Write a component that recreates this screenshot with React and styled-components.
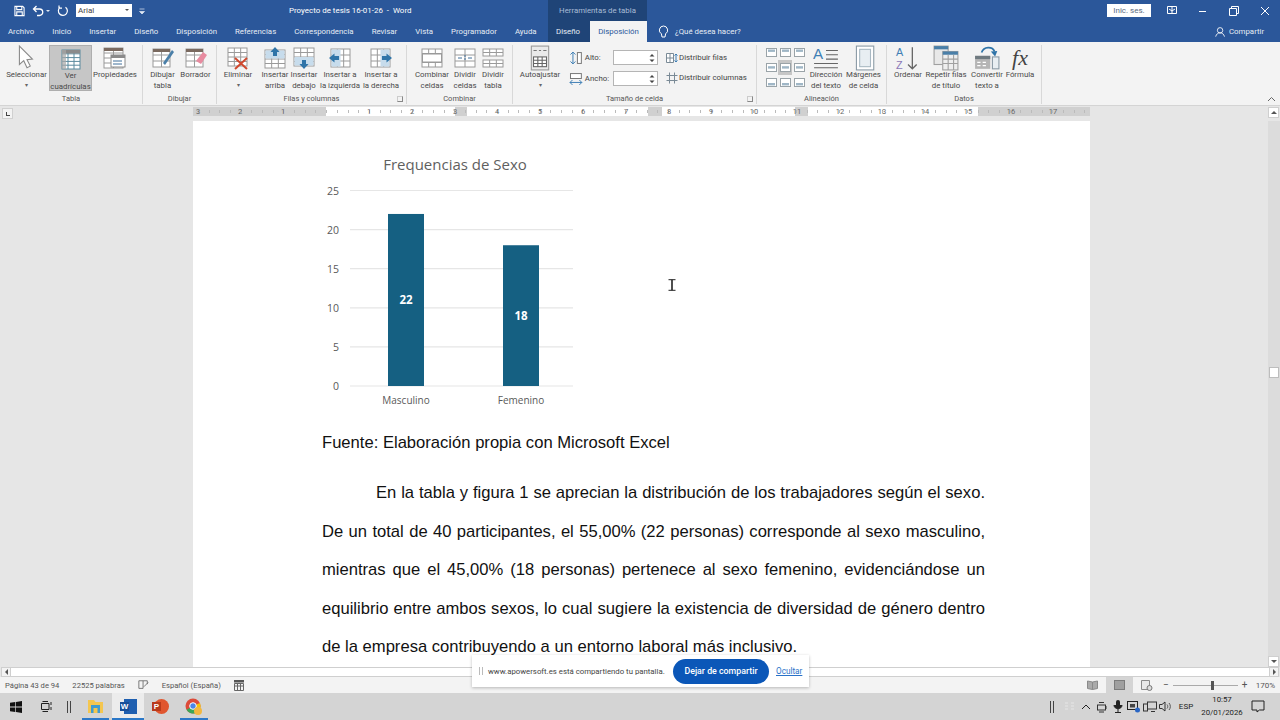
import React from 'react';
import styled, { createGlobalStyle } from 'styled-components';

const UI = `Roboto, 'Open Sans', sans-serif`;

const GlobalStyle = createGlobalStyle`
    html, body {
        margin: 0;
        padding: 0;
        height: 720px;
        overflow: hidden;
        background: #e6e6e6;
    }
    * {
        box-sizing: border-box;
    }
`;

const FormulaMark = styled.span`
    font-family: 'Liberation Serif', serif;
    font-size: 22px;
    line-height: 24px;
    color: #444;
`;

const Line = ({ d, c = '#7a7a7a', w = 1 }) => <path d={d} fill="none" stroke={c} strokeWidth={w} />;

// small ribbon table, drawn in a 24x24 box
const Grid = ({ x = 2, y = 3, w = 20, h = 18, cols = 3, rows = 4, head, c = '#9a9a9a' }) => {
    const lines = [];
    for (let i = 1; i < cols; i++) lines.push(`M${x + (w / cols) * i} ${y}V${y + h}`);
    for (let i = 1; i < rows; i++) lines.push(`M${x} ${y + (h / rows) * i}H${x + w}`);
    return (
        <g>
            <rect x={x} y={y} width={w} height={h} fill="#fff" stroke={c} />
            {head && <rect x={x} y={y} width={w} height={h / rows} fill={head} />}
            <path d={lines.join('')} stroke={c} fill="none" />
        </g>
    );
};

const Ico = ({ s = 24, children }) => (
    <svg width={s} height={s} viewBox="0 0 24 24">
        {children}
    </svg>
);

const icons = {
    select: (
        <Ico s={26}>
            <path d="M5 1L5 18L9 14.5L12 21L15 19.5L12 13.5L17 13Z" fill="#fff" stroke="#8a8a8a" />
        </Ico>
    ),
    grid: (
        <Ico s={24}>
            <Grid x={3} y={3} w={18} h={19} cols={3} rows={5} c="#5b8a9e" />
            <rect x={3} y={3} width={18} height={3.5} fill="#8a8a8a" />
            <rect x={3} y={3} width={4} height={19} fill="#a8a8a8" opacity="0.7" />
        </Ico>
    ),
    props: (
        <Ico s={24}>
            <Grid x={1} y={2} w={19} h={20} cols={2} rows={4} />
            <rect x={1} y={2} width={19} height={3} fill="#7a6a60" />
            <rect x={8} y={9} width={14} height={12} fill="#fff" stroke="#8a8a8a" />
            <rect x={8} y={9} width={14} height={3} fill="#8a8a8a" />
            <Line d="M10 15h9M10 18h9" c="#3f6f9a" />
        </Ico>
    ),
    draw: (
        <Ico s={24}>
            <Grid x={2} y={3} w={17} h={18} cols={2} rows={3} />
            <rect x={2} y={3} width={17} height={3} fill="#7a6a60" />
            <path d="M12 17L21 4L23 6L14 19Z" fill="#4a7fa8" />
        </Ico>
    ),
    eraser: (
        <Ico s={24}>
            <Grid x={2} y={3} w={17} h={18} cols={2} rows={3} />
            <rect x={2} y={3} width={17} height={3} fill="#7a6a60" />
            <path d="M12 15L19 6L23 9L17 18Z" fill="#e88ba0" />
        </Ico>
    ),
    remove: (
        <Ico s={24}>
            <Grid x={2} y={2} w={19} h={18} cols={3} rows={4} />
            <path d="M9 12L21 23M21 12L9 23" stroke="#d0492f" strokeWidth="2" fill="none" />
        </Ico>
    ),
    above: (
        <Ico s={24}>
            <Grid x={2} y={4} w={20} h={18} cols={3} rows={4} />
            <rect x={2.5} y={4.5} width={19} height={8} fill="#c7dcec" />
            <path d="M12 1L16.5 6H14V10H10V6H7.5Z" fill="#2f74a8" />
        </Ico>
    ),
    below: (
        <Ico s={24}>
            <Grid x={2} y={2} w={20} h={18} cols={3} rows={4} />
            <rect x={2.5} y={11} width={19} height={8.5} fill="#c7dcec" />
            <path d="M12 23L16.5 18H14V14H10V18H7.5Z" fill="#2f74a8" />
        </Ico>
    ),
    left: (
        <Ico s={24}>
            <Grid x={3} y={3} w={19} h={18} cols={3} rows={3} />
            <rect x={3.5} y={3.5} width={9} height={17} fill="#c7dcec" />
            <path d="M1 12L6.5 7.5V10H11V14H6.5V16.5Z" fill="#2f74a8" />
        </Ico>
    ),
    right: (
        <Ico s={24}>
            <Grid x={2} y={3} w={19} h={18} cols={3} rows={3} />
            <rect x={11.5} y={3.5} width={9} height={17} fill="#c7dcec" />
            <path d="M23 12L17.5 7.5V10H13V14H17.5V16.5Z" fill="#2f74a8" />
        </Ico>
    ),
    merge: (
        <Ico s={24}>
            <Grid x={2} y={3} w={20} h={18} cols={3} rows={4} />
            <rect x={2.5} y={8} width={19} height={8} fill="#fff" stroke="#9a9a9a" />
        </Ico>
    ),
    splitCell: (
        <Ico s={24}>
            <Grid x={2} y={3} w={20} h={18} cols={2} rows={3} />
            <path d="M12 9V15" stroke="#3f6f9a" strokeDasharray="2 1" />
            <path d="M5 12h4M15 12h4" stroke="#3f6f9a" />
        </Ico>
    ),
    splitTable: (
        <Ico s={24}>
            <Grid x={2} y={3} w={20} h={7} cols={3} rows={2} />
            <Grid x={2} y={14} w={20} h={7} cols={3} rows={2} />
        </Ico>
    ),
    autofit: (
        <Ico s={26}>
            <rect x={4} y={1} width={16} height={22} fill="#eaeaea" stroke="#9a9a9a" />
            <Line d="M6 5h3M11 5h2M15 5h3" c="#777" />
            <Grid x={6} y={11} w={12} h={9} cols={3} rows={3} c="#666" />
        </Ico>
    ),
    direction: (
        <Ico s={26}>
            <text x="0" y="13" fontFamily="Liberation Sans, sans-serif" fontSize="14" fill="#3f7fb5">
                A
            </text>
            <Line d="M12 5h11M12 9h11M12 13h11M1 17h22M1 21h22" c="#666" />
        </Ico>
    ),
    margins: (
        <Ico s={26}>
            <rect x={5} y={1} width={16} height={22} fill="#fff" stroke="#8a9aa5" />
            <rect x={8} y={4} width={10} height={16} fill="#e8eef2" stroke="#a8b8c2" />
        </Ico>
    ),
    sort: (
        <Ico s={26}>
            <text x="1" y="10" fontFamily="Liberation Sans, sans-serif" fontSize="10" fill="#3f7fb5">
                A
            </text>
            <text x="1" y="22" fontFamily="Liberation Sans, sans-serif" fontSize="10" fill="#8b78b8">
                Z
            </text>
            <Line d="M16 2V22M12 18L16 22L20 18" c="#666" w={1.2} />
        </Ico>
    ),
    repeat: (
        <Ico s={26}>
            <rect x={1} y={1} width={13} height={17} fill="#e8e8e8" stroke="#a0a0a0" />
            <rect x={1} y={1} width={13} height={3} fill="#4a7fa8" />
            <rect x={9} y={6} width={14} height={17} fill="#eee" stroke="#a0a0a0" />
            <rect x={9} y={6} width={14} height={3} fill="#4a7fa8" />
            <Line d="M9 13h14M9 17h14M14 9v14M19 9v14" c="#a0a0a0" />
        </Ico>
    ),
    convert: (
        <Ico s={26}>
            <path d="M7 7C9 1 17 1 19 6" fill="none" stroke="#2f74a8" strokeWidth="1.6" />
            <path d="M15.5 6L21.5 5.5L19.5 10.5Z" fill="#2f74a8" />
            <rect x={1} y={10} width={14} height={12} fill="#b5b5b5" />
            <rect x={1} y={10} width={14} height={3} fill="#6f7a80" />
            <Line d="M3 16h3M8 16h3M3 19h3M8 19h3" c="#fff" />
            <rect x={17} y={11} width={6} height={11} fill="#e8eef2" stroke="#8a9aa5" />
        </Ico>
    ),
    formula: (
        <FormulaMark>
            <i>fx</i>
        </FormulaMark>
    ),
};

const groups = [
    {
        title: 'Tabla',
        width: 143,
        pad: 4,
        items: [
            { label: ['Seleccionar'], icon: 'select', w: 45, caret: true },
            { label: ['Ver', 'cuadrículas'], icon: 'grid', w: 43, active: true },
            { label: ['Propiedades'], icon: 'props', w: 46 },
        ],
    },
    {
        title: 'Dibujar',
        width: 74,
        pad: 4,
        items: [
            { label: ['Dibujar', 'tabla'], icon: 'draw', w: 31 },
            { label: ['Borrador'], icon: 'eraser', w: 35 },
        ],
    },
    {
        title: 'Filas y columnas',
        width: 190,
        pad: 1,
        launcher: true,
        items: [
            { label: ['Eliminar'], icon: 'remove', w: 40, caret: true },
            { label: ['Insertar', 'arriba'], icon: 'above', w: 34 },
            { label: ['Insertar', 'debajo'], icon: 'below', w: 24 },
            { label: ['Insertar a', 'la izquierda'], icon: 'left', w: 48 },
            { label: ['Insertar a', 'la derecha'], icon: 'right', w: 34 },
        ],
    },
    {
        title: 'Combinar',
        width: 106,
        pad: 5,
        items: [
            { label: ['Combinar', 'celdas'], icon: 'merge', w: 40 },
            { label: ['Dividir', 'celdas'], icon: 'splitCell', w: 26 },
            { label: ['Dividir', 'tabla'], icon: 'splitTable', w: 30 },
        ],
    },
];

const groupsEnd = [
    {
        title: 'Datos',
        width: 155,
        pad: 2,
        items: [
            { label: ['Ordenar'], icon: 'sort', w: 38 },
            { label: ['Repetir filas', 'de título'], icon: 'repeat', w: 38 },
            { label: ['Convertir', 'texto a'], icon: 'convert', w: 44 },
            { label: ['Fórmula'], icon: 'formula', w: 22 },
        ],
    },
];

const tabs = [
    'Archivo',
    'Inicio',
    'Insertar',
    'Diseño',
    'Disposición',
    'Referencias',
    'Correspondencia',
    'Revisar',
    'Vista',
    'Programador',
    'Ayuda',
];

const rulerTicks = [
    ['3', 198], ['2', 240], ['1', 283], ['1', 369], ['2', 412], ['3', 455], ['4', 497],
    ['5', 540], ['6', 583], ['7', 626], ['8', 669], ['9', 711], ['10', 754], ['11', 797],
    ['12', 840], ['13', 882], ['14', 925], ['15', 968], ['16', 1011], ['17', 1053],
];

const rulerColumns = [
    [455, 12],
    [648, 14],
    [795, 13],
];

const Btn = ({ item }) => (
    <RibbonBtn $w={item.w} $active={item.active}>
        <IconSlot>{icons[item.icon]}</IconSlot>
        {item.label.map((t) => (
            <span key={t}>{t}</span>
        ))}
        {item.caret && <Caret>▾</Caret>}
    </RibbonBtn>
);

const Group = ({ g }) => (
    <GroupBox $w={g.width}>
        <GroupItems $pad={g.pad}>
            {g.items.map((it) => (
                <Btn key={it.label.join()} item={it} />
            ))}
        </GroupItems>
        <GroupTitle>{g.title}</GroupTitle>
        {g.launcher && <Launcher />}
    </GroupBox>
);

const AlignCell = ({ on, top, mid }) => (
    <AlignBox $on={on}>
        <svg width="11" height="9" viewBox="0 0 11 9">
            <rect x="0.5" y="0.5" width="10" height="8" fill="#fff" stroke="#9aa3a8" />
            <rect x="2" y={top ? 1.5 : mid ? 3.2 : 5} width="7" height="2.4" fill="#9fb6c6" />
        </svg>
    </AlignBox>
);

const Spinner = () => (
    <SpinBox>
        <svg width="6" height="12" viewBox="0 0 6 12">
            <path d="M0.5 4.5L3 2L5.5 4.5ZM0.5 7.5L3 10L5.5 7.5Z" fill="#444" />
        </svg>
    </SpinBox>
);

const Chart = () => {
    const yPos = (v) => 386 - v * 7.82;
    return (
        <svg width="300" height="270" viewBox="300 145 300 270">
            <g fontFamily="'Open Sans', sans-serif" fill="#595959">
                <text x="455" y="170" fontSize="15" textAnchor="middle" fill="#5f5f5f">
                    Frequencias de Sexo
                </text>
                {[0, 5, 10, 15, 20, 25].map((v) => (
                    <g key={v}>
                        <line x1="350" x2="573" y1={yPos(v)} y2={yPos(v)} stroke="#e6e6e6" strokeWidth="1.2" />
                        <text x="339" y={yPos(v) + 4} fontSize="10.5" textAnchor="end">
                            {v}
                        </text>
                    </g>
                ))}
                <rect x="388" y={yPos(22)} width="36" height={22 * 7.82} fill="#156082" />
                <rect x="503" y={yPos(18)} width="36" height={18 * 7.82} fill="#156082" />
                <text x="406" y="304" fontSize="11.5" fontWeight="700" textAnchor="middle" fill="#fff">
                    22
                </text>
                <text x="521" y="320" fontSize="11.5" fontWeight="700" textAnchor="middle" fill="#fff">
                    18
                </text>
                <text x="406" y="404" fontSize="10" textAnchor="middle">
                    Masculino
                </text>
                <text x="521" y="404" fontSize="10" textAnchor="middle">
                    Femenino
                </text>
            </g>
        </svg>
    );
};

export default function App() {
    return (
        <Screen>
            <GlobalStyle />
            <TitleBar>
                <QuickAccess>
                    <svg width="11" height="12" viewBox="0 0 12 12">
                        <path d="M1 1H9.5L11 2.5V11H1ZM3 1V4.5H8.5V1M3 11V7H9V11" fill="none" stroke="#fff" strokeWidth="1.2" />
                    </svg>
                    <svg width="20" height="12" viewBox="0 0 20 12">
                        <path d="M3 4H8.5A3.2 3.2 0 0 1 8.5 10.5H6M5.5 1L2.5 4L5.5 7" fill="none" stroke="#fff" strokeWidth="1.3" />
                        <path d="M15 5L17 7L19 5Z" fill="#dfe7f2" />
                    </svg>
                    <svg width="12" height="12" viewBox="0 0 12 12">
                        <path d="M8.5 2.2A4.5 4.5 0 1 1 3 2.4M2 0.5V3.2H5" fill="none" stroke="#fff" strokeWidth="1.2" />
                    </svg>
                    <FontPicker>
                        Arial
                        <FontCaret />
                    </FontPicker>
                    <svg width="8" height="10" viewBox="0 0 8 10">
                        <path d="M1.5 3H6.5M1.5 5.5L4 8L6.5 5.5Z" fill="#dfe7f2" stroke="#dfe7f2" strokeWidth="0.7" />
                    </svg>
                </QuickAccess>
                <DocTitle>Proyecto de tesis 16-01-26&nbsp; -&nbsp; Word</DocTitle>
                <ToolsContext>Herramientas de tabla</ToolsContext>
                <WindowArea>
                    <SignIn>Inic. ses.</SignIn>
                    <WinBtn>
                        <svg width="10" height="9" viewBox="0 0 10 9">
                            <path d="M0.5 0.5H9.5V7.5H0.5ZM5 0.5V7.5" fill="#2b579a" stroke="#fff" />
                            <path d="M2 3L5 5L8 3" fill="none" stroke="#fff" />
                        </svg>
                    </WinBtn>
                    <WinBtn>
                        <svg width="10" height="10" viewBox="0 0 10 10">
                            <path d="M1 5.5H8" stroke="#fff" />
                        </svg>
                    </WinBtn>
                    <WinBtn>
                        <svg width="10" height="10" viewBox="0 0 10 10">
                            <path d="M0.5 2.5H7.5V9.5H0.5ZM2.5 2.5V0.5H9.5V7.5H7.5" fill="none" stroke="#fff" />
                        </svg>
                    </WinBtn>
                    <WinBtn>
                        <svg width="10" height="10" viewBox="0 0 10 10">
                            <path d="M1 1L9 9M9 1L1 9" stroke="#fff" />
                        </svg>
                    </WinBtn>
                </WindowArea>
            </TitleBar>
            <TabBar>
                <TabList>
                    {tabs.map((t) => (
                        <Tab key={t}>{t}</Tab>
                    ))}
                </TabList>
                <ContextTabs>
                    <Tab>Diseño</Tab>
                    <ActiveTab>Disposición</ActiveTab>
                </ContextTabs>
                <TellMe>
                    <svg width="11" height="14" viewBox="0 0 11 14">
                        <path d="M5.5 1A4.2 4.2 0 0 1 7.6 8.8L7 12H4L3.4 8.8A4.2 4.2 0 0 1 5.5 1Z" fill="none" stroke="#fff" />
                    </svg>
                    ¿Qué desea hacer?
                </TellMe>
                <Share>
                    <svg width="11" height="12" viewBox="0 0 13 12">
                        <circle cx="6" cy="4" r="3.2" fill="none" stroke="#fff" />
                        <path d="M0.8 11.5C1.5 8.5 3.5 7 6 7C8.5 7 10.5 8.5 11.2 11.5" fill="none" stroke="#fff" />
                    </svg>
                    Compartir
                </Share>
            </TabBar>
            <Ribbon>
                {groups.map((g) => (
                    <Group key={g.title} g={g} />
                ))}
                <GroupBox $w={244}>
                    <GroupItems $pad={1}>
                        <Btn item={{ label: ['Autoajustar'], icon: 'autofit', w: 52, caret: true }} />
                        <SizeFields>
                            <SizeRow>
                                <svg width="14" height="14" viewBox="0 0 14 14">
                                    <path d="M4 1V13M1.5 3.5L4 1L6.5 3.5M1.5 10.5L4 13L6.5 10.5" fill="none" stroke="#3f7fb5" />
                                    <rect x="8.5" y="1.5" width="4" height="11" fill="#fff" stroke="#777" />
                                </svg>
                                <FieldLabel>Alto:</FieldLabel>
                                <NumberField>
                                    <Spinner />
                                </NumberField>
                            </SizeRow>
                            <SizeRow>
                                <svg width="14" height="14" viewBox="0 0 14 14">
                                    <rect x="1.5" y="1.5" width="11" height="5" fill="#fff" stroke="#777" />
                                    <path d="M1 10.5H13M3.5 8L1 10.5L3.5 13M10.5 8L13 10.5L10.5 13" fill="none" stroke="#3f7fb5" />
                                </svg>
                                <FieldLabel>Ancho:</FieldLabel>
                                <NumberField>
                                    <Spinner />
                                </NumberField>
                            </SizeRow>
                        </SizeFields>
                        <DistributeList>
                            <DistributeRow>
                                <svg width="12" height="12" viewBox="0 0 12 12">
                                    <path d="M0.5 1.5H7.5V10.5H0.5ZM0.5 6H7.5M4 1.5V10.5" fill="#fff" stroke="#7a8a96" />
                                    <path d="M10 2V10M8.5 3.5L10 2L11.5 3.5M8.5 8.5L10 10L11.5 8.5" fill="none" stroke="#3f7fb5" />
                                </svg>
                                Distribuir filas
                            </DistributeRow>
                            <DistributeRow>
                                <svg width="12" height="12" viewBox="0 0 12 12">
                                    <path d="M3.5 0.5V11.5M8.5 0.5V11.5M0.5 3.5H11.5M0.5 8.5H11.5" fill="none" stroke="#7a8a96" />
                                </svg>
                                Distribuir columnas
                            </DistributeRow>
                        </DistributeList>
                    </GroupItems>
                    <GroupTitle>Tamaño de celda</GroupTitle>
                    <Launcher />
                </GroupBox>
                <GroupBox $w={130}>
                    <GroupItems $pad={7}>
                        <AlignGrid>
                            <AlignCell top />
                            <AlignCell top />
                            <AlignCell top />
                            <AlignCell mid />
                            <AlignCell mid on />
                            <AlignCell mid />
                            <AlignCell />
                            <AlignCell />
                            <AlignCell />
                        </AlignGrid>
                        <Btn item={{ label: ['Dirección', 'del texto'], icon: 'direction', w: 38 }} />
                        <Btn item={{ label: ['Márgenes', 'de celda'], icon: 'margins', w: 37 }} />
                    </GroupItems>
                    <GroupTitle>Alineación</GroupTitle>
                </GroupBox>
                {groupsEnd.map((g) => (
                    <Group key={g.title} g={g} />
                ))}
                <Collapse>
                    <svg width="9" height="6" viewBox="0 0 9 6">
                        <path d="M1 5L4.5 1.5L8 5" fill="none" stroke="#666" />
                    </svg>
                </Collapse>
            </Ribbon>
            <RulerBar>
                <TabMark>
                    <TabGlyph />
                </TabMark>
                <Ruler>
                    <RulerMargin $w={133} />
                    <RulerMargin $w={112} $right />
                    {rulerColumns.map(([x, w]) => (
                        <RulerColumn key={x} style={{ left: x - 193, width: w }} />
                    ))}
                    {rulerTicks.map(([n, x]) => (
                        <RulerNum key={`${n}_${x}`} style={{ left: x - 193 }}>
                            {n}
                        </RulerNum>
                    ))}
                </Ruler>
                <ScrollUp>
                    <Arrow $dir="up" />
                </ScrollUp>
            </RulerBar>
            <Workspace>
                <PageArea>
                    <Page>
                        <ChartWrap>
                            <Chart />
                        </ChartWrap>
                        <Source>Fuente: Elaboración propia con Microsoft Excel</Source>
                        <Paragraph>
                            En la tabla y figura 1 se aprecian la distribución de los trabajadores según el sexo. De
                            un total de 40 participantes, el 55,00% (22 personas) corresponde al sexo masculino,
                            mientras que el 45,00% (18 personas) pertenece al sexo femenino, evidenciándose un
                            equilibrio entre ambos sexos, lo cual sugiere la existencia de diversidad de género dentro
                            de la empresa contribuyendo a un entorno laboral más inclusivo.
                        </Paragraph>
                    </Page>
                    <TextCursor>
                        <svg width="8" height="12" viewBox="0 0 8 12">
                            <path d="M0.5 0.7H7.5M0.5 11.3H7.5" stroke="#222" fill="none" />
                            <path d="M4 0.7V11.3" stroke="#222" strokeWidth="1.6" fill="none" />
                        </svg>
                    </TextCursor>
                </PageArea>
                <VScroll>
                    <VThumb />
                    <ScrollDown>
                        <Arrow $dir="down" />
                    </ScrollDown>
                </VScroll>
            </Workspace>
            <HScroll>
                <ScrollCap>
                    <Arrow $dir="left" />
                </ScrollCap>
                <HTrack />
                <ScrollCap>
                    <Arrow $dir="right" />
                </ScrollCap>
            </HScroll>
            <StatusBar>
                <StatusText>Página 43 de 94</StatusText>
                <StatusText>22525 palabras</StatusText>
                <svg width="11" height="12" viewBox="0 0 13 12">
                    <path d="M1 1H6V10H1ZM6 1H11V5M7 8L12 3" fill="none" stroke="#666" />
                </svg>
                <StatusText>Español (España)</StatusText>
                <svg width="10" height="11" viewBox="0 0 10 11">
                    <path d="M0.5 3.5H9.5V10.5H0.5ZM0.5 6H9.5M3.5 3.5V10.5M6.5 3.5V10.5" fill="none" stroke="#666" />
                    <rect x="0" y="0" width="10" height="2.5" fill="#555" />
                </svg>
                <ViewControls>
                    <ViewBtn>
                        <svg width="11" height="10" viewBox="0 0 11 10">
                            <path d="M0.5 1L5.5 2V9.5L0.5 8.5ZM10.5 1L5.5 2V9.5L10.5 8.5Z" fill="#aaa" stroke="#8a8a8a" />
                        </svg>
                    </ViewBtn>
                    <ViewBtn $on>
                        <svg width="11" height="10" viewBox="0 0 11 10">
                            <rect x="0.5" y="0.5" width="10" height="9" fill="#a0a0a0" stroke="#7c7c7c" />
                        </svg>
                    </ViewBtn>
                    <ViewBtn>
                        <svg width="12" height="11" viewBox="0 0 12 11">
                            <path d="M0.5 0.5H8.5V9.5H0.5Z" fill="#e8e8e8" stroke="#8a8a8a" />
                            <circle cx="8.5" cy="8" r="2.5" fill="#ddd" stroke="#777" />
                        </svg>
                    </ViewBtn>
                </ViewControls>
                <ZoomControl>
                    <ZoomSign>−</ZoomSign>
                    <ZoomTrack>
                        <ZoomThumb />
                    </ZoomTrack>
                    <ZoomSign>+</ZoomSign>
                    <ZoomValue>170%</ZoomValue>
                </ZoomControl>
            </StatusBar>
            <Taskbar>
                <TaskIcons>
                    <TaskSlot $w={32}>
                        <svg width="12" height="12" viewBox="0 0 12 12">
                            <path d="M0 1.8L5.3 1V5.6H0ZM6 0.9L12 0V5.6H6ZM0 6.4H5.3V11L0 10.2ZM6 6.4H12V12L6 11.1Z" fill="#111" />
                        </svg>
                    </TaskSlot>
                    <TaskSlot $w={30}>
                        <svg width="12" height="11" viewBox="0 0 12 11">
                            <path d="M0.5 2.5H8V8.5H0.5ZM1.5 0.5H7M1.5 10.5H7M10 1V4M10 6V9" fill="none" stroke="#222" />
                        </svg>
                    </TaskSlot>
                    <TaskSlot $w={14}>
                        <Bars />
                    </TaskSlot>
                    <TaskSlot $w={27} $ml={6} $open>
                        <svg width="17" height="15" viewBox="0 0 17 15">
                            <path d="M1 1H7L8.5 3H16V14H1Z" fill="#f4c64f" />
                            <rect x="4" y="6" width="9" height="8" fill="#3f9bd0" />
                            <rect x="6.5" y="9" width="4" height="5" fill="#f4c64f" />
                        </svg>
                    </TaskSlot>
                    <TaskSlot $w={32} $ml={3} $open $active>
                        <svg width="17" height="15" viewBox="0 0 17 15">
                            <rect x="4" y="0" width="13" height="15" fill="#1f5fb0" />
                            <rect x="0" y="3" width="9" height="9" fill="#1a4f98" />
                            <WordLetter x="4.5" y="10.4" textAnchor="middle">W</WordLetter>
                        </svg>
                    </TaskSlot>
                    <TaskSlot $w={32}>
                        <svg width="17" height="15" viewBox="0 0 17 15">
                            <circle cx="9.5" cy="7.5" r="7.5" fill="#e0562f" />
                            <rect x="0" y="3" width="9" height="9" fill="#b83a1b" />
                            <WordLetter x="4.5" y="10.4" textAnchor="middle">P</WordLetter>
                        </svg>
                    </TaskSlot>
                    <TaskSlot $w={28} $ml={4} $open>
                        <svg width="18" height="18" viewBox="0 0 18 18">
                            <circle cx="8" cy="8" r="7.5" fill="#dd4b39" />
                            <path d="M8 8L1.5 11.8A7.5 7.5 0 0 0 11.5 14.7Z" fill="#3aa757" />
                            <path d="M8 8L11.5 14.7A7.5 7.5 0 0 0 15 5Z" fill="#f4c20d" />
                            <circle cx="8" cy="8" r="3.3" fill="#4a85e8" stroke="#fff" />
                            <circle cx="13" cy="13" r="4" fill="#f2b73f" />
                        </svg>
                    </TaskSlot>
                </TaskIcons>
                <Tray>
                    <TraySlot $w={16}>
                        <Bars />
                    </TraySlot>
                    <TraySlot $w={18}>
                        <svg width="9" height="9" viewBox="0 0 9 9">
                            <path d="M0 1H3M0 4H3M0 7H3M6 1H9M6 4H9M6 7H9" stroke="#e6e6e6" />
                        </svg>
                    </TraySlot>
                    <TraySlot $w={16}>
                        <svg width="10" height="6" viewBox="0 0 10 6">
                            <path d="M1 5L5 1L9 5" fill="none" stroke="#222" />
                        </svg>
                    </TraySlot>
                    <TraySlot $w={16}>
                        <svg width="12" height="12" viewBox="0 0 12 12">
                            <rect x="1.5" y="4" width="8" height="5" fill="none" stroke="#333" />
                            <path d="M3 1.5H8M3 11H8M10 5V8" stroke="#333" />
                        </svg>
                    </TraySlot>
                    <TraySlot $w={16}>
                        <svg width="10" height="13" viewBox="0 0 10 13">
                            <rect x="3" y="0" width="4" height="8" rx="2" fill="#222" />
                            <path d="M1 5C1 10 9 10 9 5M5 9V12M2 12.5H8" fill="#222" stroke="#222" />
                        </svg>
                    </TraySlot>
                    <TraySlot $w={15}>
                        <svg width="13" height="13" viewBox="0 0 13 13">
                            <rect x="0.5" y="1.5" width="10" height="8" fill="none" stroke="#222" />
                            <rect x="3" y="4" width="5" height="3.5" fill="#444" />
                            <circle cx="10.5" cy="10" r="2.5" fill="#2a66c4" />
                        </svg>
                    </TraySlot>
                    <TraySlot $w={17}>
                        <svg width="14" height="12" viewBox="0 0 14 12">
                            <rect x="4.5" y="1" width="9" height="7" fill="none" stroke="#333" />
                            <rect x="0.5" y="3" width="4" height="7" fill="none" stroke="#333" />
                            <path d="M8 10.5H12" stroke="#333" />
                        </svg>
                    </TraySlot>
                    <TraySlot $w={15}>
                        <svg width="13" height="11" viewBox="0 0 13 11">
                            <path d="M0.5 3.5H3L6 1V10L3 7.5H0.5Z" fill="none" stroke="#333" />
                            <path d="M8 3.5C9 4.5 9 6.5 8 7.5M10 2C11.8 4 11.8 7 10 9" fill="none" stroke="#555" />
                        </svg>
                    </TraySlot>
                    <TraySlot $w={26}>ESP</TraySlot>
                    <Clock>
                        <span>10:57</span>
                        <span>20/01/2026</span>
                    </Clock>
                    <TraySlot $w={26}>
                        <svg width="14" height="13" viewBox="0 0 14 13">
                            <path d="M1 1H13V10H8.5L6 12V10H1Z" fill="none" stroke="#222" />
                        </svg>
                    </TraySlot>
                </Tray>
            </Taskbar>
            <ShareBar>
                <Grip />
                <ShareText>www.apowersoft.es está compartiendo tu pantalla.</ShareText>
                <StopBtn>Dejar de compartir</StopBtn>
                <HideLink>Ocultar</HideLink>
            </ShareBar>
        </Screen>
    );
}

const Screen = styled.div`
    position: relative;
    width: 1280px;
    height: 720px;
    display: flex;
    flex-direction: column;
    overflow: hidden;
    font-family: ${UI};
    color: #444;
    background: #e6e6e6;
`;

const TitleBar = styled.div`
    height: 21px;
    flex: none;
    display: flex;
    align-items: center;
    background: #2b579a;
    color: #fff;
    font-size: 8.5px;
`;

const QuickAccess = styled.div`
    width: 289px;
    padding-left: 14px;
    display: flex;
    align-items: center;
    gap: 6px;
`;

const FontPicker = styled.div`
    position: relative;
    width: 56px;
    height: 13px;
    margin-left: 1px;
    padding-left: 2px;
    background: #fff;
    color: #444;
    font-size: 8px;
    line-height: 13px;
`;

const FontCaret = styled.i`
    position: absolute;
    right: 3px;
    top: 5px;
    border: 2.5px solid transparent;
    border-top-color: #555;
`;

const DocTitle = styled.div`
    width: 259px;
    font-size: 7.95px;
    white-space: nowrap;
`;

const ToolsContext = styled.div`
    width: 99px;
    height: 100%;
    display: flex;
    align-items: center;
    justify-content: center;
    background: #1f4477;
    color: #a9bcd6;
    font-size: 7.8px;
`;

const WindowArea = styled.div`
    margin-left: auto;
    display: flex;
    align-items: center;
`;

const SignIn = styled.div`
    width: 44px;
    height: 13px;
    margin-right: 5px;
    background: #fff;
    color: #5a6a80;
    font-size: 8px;
    line-height: 13px;
    text-align: center;
`;

const WinBtn = styled.div`
    width: 31px;
    display: flex;
    justify-content: center;
    align-items: center;
`;

const TabBar = styled.div`
    height: 21px;
    flex: none;
    display: flex;
    align-items: center;
    background: #2b579a;
    color: #e6ecf5;
    font-size: 7.85px;
    white-space: nowrap;
`;

const TabList = styled.div`
    width: 548px;
    flex: none;
    padding-left: 8px;
    display: flex;
    gap: 18px;
`;

const Tab = styled.span`
    flex: none;
`;

const ContextTabs = styled.div`
    width: 99px;
    height: 100%;
    flex: none;
    padding-left: 8px;
    display: flex;
    align-items: center;
    gap: 10px;
    background: #1f4477;
`;

const ActiveTab = styled.span`
    height: 100%;
    width: 57px;
    display: flex;
    align-items: center;
    justify-content: center;
    background: #f3f3f3;
    color: #2b579a;
`;

const TellMe = styled.div`
    margin-left: 11px;
    display: flex;
    align-items: center;
    gap: 6px;
`;

const Share = styled.div`
    margin-left: auto;
    width: 65px;
    display: flex;
    align-items: center;
    gap: 3px;
`;

const Ribbon = styled.div`
    position: relative;
    height: 63px;
    flex: none;
    display: flex;
    background: #f3f3f3;
    font-size: 7.85px;
`;

const GroupBox = styled.div`
    position: relative;
    flex: none;
    width: ${(p) => p.$w}px;
    margin: 3px 0 1px;
    display: flex;
    flex-direction: column;
    border-right: 1px solid #d8d8d8;
`;

const GroupItems = styled.div`
    flex: 1;
    padding-left: ${(p) => p.$pad}px;
    display: flex;
    min-height: 0;
`;

const GroupTitle = styled.div`
    height: 11px;
    line-height: 11px;
    text-align: center;
    color: #555;
    font-size: 7.5px;
`;

const Launcher = styled.i`
    position: absolute;
    right: 3px;
    bottom: 2px;
    width: 6px;
    height: 6px;
    border: 1px solid #888;
    border-top-color: #ccc;
    border-left-color: #ccc;
`;

const RibbonBtn = styled.div`
    flex: none;
    width: ${(p) => p.$w}px;
    height: 46px;
    display: flex;
    flex-direction: column;
    align-items: center;
    color: #4a4a4a;
    line-height: 10.5px;
    white-space: nowrap;
    background: ${(p) => (p.$active ? '#c6c6c6' : 'transparent')};
    border: ${(p) => (p.$active ? '1px solid #aeaeae' : 'none')};
`;

const IconSlot = styled.div`
    height: 25px;
    flex: none;
    display: flex;
    align-items: center;
    justify-content: center;
`;

const Caret = styled.span`
    font-size: 6px;
    line-height: 8px;
    color: #666;
`;

const SizeFields = styled.div`
    width: 89px;
    margin-left: 3px;
    display: flex;
    flex-direction: column;
    gap: 6px;
    padding-top: 5px;
`;

const SizeRow = styled.div`
    height: 15px;
    display: flex;
    align-items: center;
    gap: 2px;
`;

const FieldLabel = styled.span`
    width: 26px;
`;

const NumberField = styled.div`
    width: 46px;
    height: 15px;
    margin-left: auto;
    display: flex;
    justify-content: flex-end;
    background: #fff;
    border: 1px solid #b5b5b5;
`;

const SpinBox = styled.div`
    width: 8px;
    display: flex;
    align-items: center;
`;

const DistributeList = styled.div`
    width: 88px;
    margin-left: 8px;
    display: flex;
    flex-direction: column;
    gap: 7px;
    padding-top: 6px;
`;

const DistributeRow = styled.div`
    height: 13px;
    display: flex;
    align-items: center;
    gap: 1px;
    white-space: nowrap;
`;

const AlignGrid = styled.div`
    width: 43px;
    display: grid;
    grid-template-columns: repeat(3, 14px);
    grid-auto-rows: 15px;
`;

const AlignBox = styled.div`
    display: flex;
    align-items: center;
    justify-content: center;
    background: ${(p) => (p.$on ? '#c6c6c6' : 'transparent')};
`;

const Collapse = styled.div`
    position: absolute;
    right: 4px;
    bottom: 1px;
`;

const RulerBar = styled.div`
    height: 16px;
    flex: none;
    display: flex;
    align-items: flex-start;
    background: #e6e6e6;
    border-top: 1px solid #d4d4d4;
`;

const TabMark = styled.div`
    width: 11px;
    height: 11px;
    margin: 2px 0 0 2px;
    display: flex;
    align-items: center;
    justify-content: center;
    background: #f3f3f3;
    border: 1px solid #d0d0d0;
`;

const TabGlyph = styled.i`
    width: 4px;
    height: 4px;
    border-left: 1px solid #444;
    border-bottom: 1px solid #444;
`;

const Ruler = styled.div`
    position: relative;
    width: 897px;
    height: 9px;
    margin: 1px 0 0 180px;
    display: flex;
    background: #fff;

    &::after {
        content: '';
        position: absolute;
        left: 5px;
        right: 0;
        top: 3px;
        height: 3px;
        background: repeating-linear-gradient(90deg, #bbb 0 1px, transparent 1px 10.68px);
    }
`;

const RulerMargin = styled.div`
    width: ${(p) => p.$w}px;
    height: 100%;
    background: #d0d0d0;
    margin-left: ${(p) => (p.$right ? 'auto' : 0)};
    flex: none;
`;

const RulerColumn = styled.div`
    position: absolute;
    top: 0;
    height: 100%;
    background: #d0d0d0;
`;

const RulerNum = styled.span`
    position: absolute;
    z-index: 1;
    top: 0;
    padding: 0 2px;
    transform: translateX(-50%);
    font-size: 7.5px;
    line-height: 9px;
    color: #666;
`;

const ScrollUp = styled.div`
    width: 11px;
    height: 11px;
    margin: 1px 1px 0 auto;
    display: flex;
    align-items: center;
    justify-content: center;
    background: #fff;
    border: 1px solid #cfcfcf;
`;

const ScrollDown = styled(ScrollUp)`
    margin: auto 0 0;
`;

const Arrow = styled.i`
    width: 0;
    height: 0;
    border: 3px solid transparent;
    ${(p) =>
        p.$dir === 'up'
            ? 'border-bottom-color:#555;margin-top:-3px;'
            : p.$dir === 'down'
              ? 'border-top-color:#555;margin-top:3px;'
              : p.$dir === 'left'
                ? 'border-right-color:#555;margin-left:-3px;'
                : 'border-left-color:#555;margin-left:3px;'}
`;

const Workspace = styled.div`
    position: relative;
    height: 546px;
    flex: none;
    display: flex;
`;

const PageArea = styled.div`
    flex: 1;
    padding-left: 193px;
    background: #e6e6e6;
    overflow: hidden;
`;

const Page = styled.div`
    width: 897px;
    height: 546px;
    padding: 24px 105px 0 129px;
    background: #fff;
    color: #111;
    font-family: 'Liberation Sans', Arial, sans-serif;
    font-size: 16.6px;
`;

const ChartWrap = styled.div`
    height: 270px;
    margin: 0 0 0 -22px;
`;

const Source = styled.p`
    margin: 9px 0 0;
    line-height: 38.4px;
`;

const Paragraph = styled.p`
    margin: 12px 0 0;
    line-height: 38.4px;
    text-align: justify;
    text-indent: 54px;
`;

const TextCursor = styled.div`
    position: absolute;
    display: flex;
    left: 668px;
    top: 158px;
`;

const VScroll = styled.div`
    position: relative;
    width: 12px;
    flex: none;
    display: flex;
    flex-direction: column;
    background: #dcdcdc;
`;

const VThumb = styled.div`
    position: absolute;
    top: 246px;
    left: 1px;
    width: 10px;
    height: 11px;
    background: #fff;
    border: 1px solid #bdbdbd;
`;

const HScroll = styled.div`
    height: 10px;
    flex: none;
    display: flex;
    align-items: stretch;
    padding: 0 1px;
    background: #e6e6e6;
`;

const ScrollCap = styled.div`
    width: 10px;
    display: flex;
    align-items: center;
    justify-content: center;
    background: #f3f3f3;
    border: 1px solid #cfcfcf;
`;

const HTrack = styled.div`
    flex: 1;
    background: #fff;
    border-top: 1px solid #cfcfcf;
    border-bottom: 1px solid #cfcfcf;
`;

const StatusBar = styled.div`
    height: 16px;
    flex: none;
    padding-left: 5px;
    display: flex;
    align-items: center;
    gap: 13px;
    background: #f3f3f3;
    color: #555;
`;

const StatusText = styled.span`
    font-size: 7.6px;
    white-space: nowrap;
`;

const ViewControls = styled.div`
    margin-left: auto;
    height: 100%;
    display: flex;
    align-items: center;
`;

const ViewBtn = styled.div`
    width: 27px;
    height: 100%;
    display: flex;
    align-items: center;
    justify-content: center;
    background: ${(p) => (p.$on ? '#d4d4d4' : 'transparent')};
`;

const ZoomControl = styled.div`
    width: 120px;
    flex: none;
    margin-left: -13px;
    padding: 0 5px 0 3px;
    display: flex;
    align-items: center;
    gap: 4px;
    font-size: 8px;
`;

const ZoomSign = styled.span`
    font-size: 10px;
    line-height: 10px;
`;

const ZoomTrack = styled.div`
    position: relative;
    width: 65px;
    height: 1px;
    background: #aaa;
`;

const ZoomThumb = styled.i`
    position: absolute;
    left: 38px;
    top: -4px;
    width: 3px;
    height: 9px;
    background: #555;
`;

const ZoomValue = styled.span`
    margin-left: auto;
`;

const Taskbar = styled.div`
    flex: 1;
    display: flex;
    align-items: stretch;
    justify-content: space-between;
    background: #d4d4d4;
`;

const TaskIcons = styled.div`
    display: flex;
`;

const TaskSlot = styled.div`
    width: ${(p) => p.$w}px;
    margin-left: ${(p) => p.$ml || 0}px;
    display: flex;
    align-items: center;
    justify-content: center;
    background: ${(p) => (p.$active ? '#ececec' : 'transparent')};
    border-top: 2px solid transparent;
    border-bottom: 2px solid ${(p) => (p.$open ? '#2b78c8' : 'transparent')};
`;

const Bars = styled.i`
    width: 4px;
    height: 12px;
    border-left: 1px solid #444;
    border-right: 1px solid #444;
`;

const WordLetter = styled.text`
    fill: #fff;
    font-family: 'Liberation Sans', sans-serif;
    font-size: 8px;
    font-weight: 700;
`;

const Tray = styled.div`
    display: flex;
    align-items: center;
    padding-right: 9px;
`;

const TraySlot = styled.div`
    width: ${(p) => p.$w}px;
    flex: none;
    display: flex;
    align-items: center;
    justify-content: center;
    font-size: 8px;
    color: #222;
`;

const Clock = styled.div`
    width: 46px;
    display: flex;
    flex-direction: column;
    align-items: center;
    font-size: 7.8px;
    line-height: 12.5px;
    color: #222;
    white-space: nowrap;
`;

const ShareBar = styled.div`
    position: absolute;
    left: 472px;
    top: 655px;
    width: 337px;
    height: 32px;
    padding-left: 7px;
    display: flex;
    align-items: center;
    background: #fff;
    box-shadow: 0 1px 3px rgba(0, 0, 0, 0.25);
`;

const Grip = styled.i`
    width: 4px;
    height: 8px;
    border-left: 1px solid #bbb;
    border-right: 1px solid #bbb;
`;

const ShareText = styled.span`
    width: 178px;
    margin-left: 5px;
    font-size: 7.8px;
    color: #444;
    white-space: nowrap;
`;

const StopBtn = styled.div`
    width: 96px;
    height: 25px;
    margin-left: 7px;
    border-radius: 13px;
    background: #0b57b8;
    color: #fff;
    font-size: 8.8px;
    font-weight: 500;
    line-height: 25px;
    text-align: center;
`;

const HideLink = styled.span`
    margin-left: 7px;
    font-size: 8.2px;
    color: #2a72c8;
    text-decoration: underline;
`;
